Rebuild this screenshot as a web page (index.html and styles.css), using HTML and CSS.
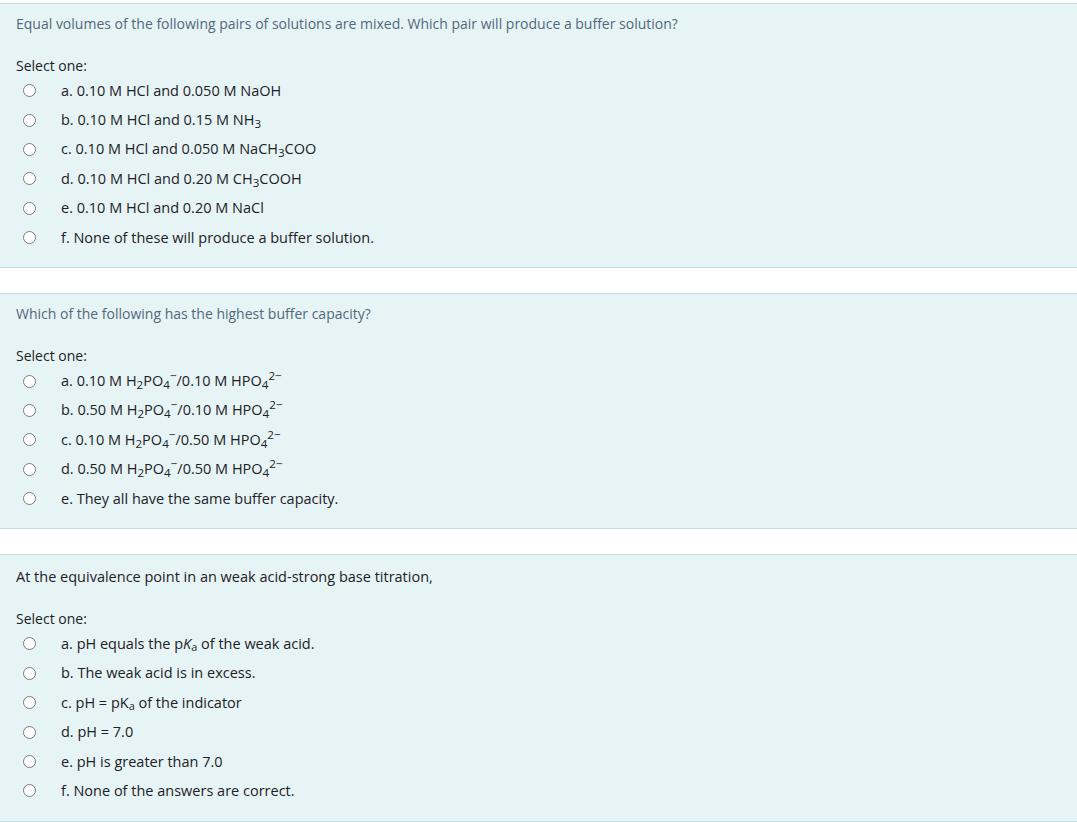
FILE: index.html
```html
<!DOCTYPE html>
<html lang="en">
<head>
<meta charset="utf-8">
<title>Quiz</title>
<link rel="stylesheet" href="styles.css">
</head>
<body>
<div class="page">
  <div class="que">
    <div class="qtext muted">Equal volumes of the following pairs of solutions are mixed. Which pair will produce a buffer solution?</div>
    <div class="prompt">Select one:</div>
    <div class="answers">
      <label class="opt"><span class="radio"></span><span class="lbl">a. 0.10 M HCl and 0.050 M NaOH</span></label>
      <label class="opt"><span class="radio"></span><span class="lbl">b. 0.10 M HCl and 0.15 M NH<sub>3</sub></span></label>
      <label class="opt"><span class="radio"></span><span class="lbl">c. 0.10 M HCl and 0.050 M NaCH<sub>3</sub>COO</span></label>
      <label class="opt"><span class="radio"></span><span class="lbl">d. 0.10 M HCl and 0.20 M CH<sub>3</sub>COOH</span></label>
      <label class="opt"><span class="radio"></span><span class="lbl">e. 0.10 M HCl and 0.20 M NaCl</span></label>
      <label class="opt"><span class="radio"></span><span class="lbl">f. None of these will produce a buffer solution.</span></label>
    </div>
  </div>

  <div class="que">
    <div class="qtext muted">Which of the following has the highest buffer capacity?</div>
    <div class="prompt">Select one:</div>
    <div class="answers">
      <label class="opt"><span class="radio"></span><span class="lbl">a. 0.10 M H<sub>2</sub>PO<sub>4</sub><sup>−</sup>/0.10 M HPO<sub>4</sub><sup>2−</sup></span></label>
      <label class="opt"><span class="radio"></span><span class="lbl">b. 0.50 M H<sub>2</sub>PO<sub>4</sub><sup>−</sup>/0.10 M HPO<sub>4</sub><sup>2−</sup></span></label>
      <label class="opt"><span class="radio"></span><span class="lbl">c. 0.10 M H<sub>2</sub>PO<sub>4</sub><sup>−</sup>/0.50 M HPO<sub>4</sub><sup>2−</sup></span></label>
      <label class="opt"><span class="radio"></span><span class="lbl">d. 0.50 M H<sub>2</sub>PO<sub>4</sub><sup>−</sup>/0.50 M HPO<sub>4</sub><sup>2−</sup></span></label>
      <label class="opt"><span class="radio"></span><span class="lbl">e. They all have the same buffer capacity.</span></label>
    </div>
  </div>

  <div class="que que-tall">
    <div class="qtext">At the equivalence point in an weak acid-strong base titration,</div>
    <div class="prompt">Select one:</div>
    <div class="answers">
      <label class="opt"><span class="radio"></span><span class="lbl">a. pH equals the p<i>K</i><sub class="ka">a</sub> of the weak acid.</span></label>
      <label class="opt"><span class="radio"></span><span class="lbl">b. The weak acid is in excess.</span></label>
      <label class="opt"><span class="radio"></span><span class="lbl">c. pH = pK<sub class="ka">a</sub> of the indicator</span></label>
      <label class="opt"><span class="radio"></span><span class="lbl">d. pH = 7.0</span></label>
      <label class="opt"><span class="radio"></span><span class="lbl">e. pH is greater than 7.0</span></label>
      <label class="opt"><span class="radio"></span><span class="lbl">f. None of the answers are correct.</span></label>
    </div>
  </div>
</div>
</body>
</html>
```

FILE: styles.css
```css
html, body {
  margin: 0;
  padding: 0;
  background: #ffffff;
}

.page {
  padding-top: 3px;
  display: flex;
  flex-direction: column;
  gap: 25px;
  font-family: "Open Sans", "Noto Sans", "DejaVu Sans", sans-serif;
  font-size: 14.5px;
  color: #1d2125;
}

.que {
  background: #e7f4f6;
  border-top: 1px solid #bfe0e6;
  border-bottom: 1px solid #bfe0e6;
  padding: 10px 16px 15px 16px;
}

.que-tall {
  padding-top: 12px;
}

.qtext {
  line-height: 20px;
  color: #1d2125;
}

.qtext.muted {
  font-size: 14px;
  color: #51687a;
}

.prompt {
  margin-top: 22px;
  font-size: 14px;
  line-height: 20px;
}

.answers {
  display: flex;
  flex-direction: column;
}

.opt {
  display: flex;
  align-items: center;
  height: 29.4px;
  line-height: 20px;
}

.radio {
  flex: none;
  box-sizing: border-box;
  width: 13px;
  height: 13px;
  margin-left: 7px;
  margin-right: 25px;
  border: 1px solid #7a7a7a;
  border-radius: 50%;
  background: #ffffff;
}

.lbl sub,
.lbl sup {
  font-size: 80%;
  line-height: 0;
}

.lbl sub {
  vertical-align: -0.25em;
}

.lbl sup {
  vertical-align: 0.5em;
}

.lbl sub.ka {
  font-size: 75%;
  vertical-align: -0.15em;
}
```
